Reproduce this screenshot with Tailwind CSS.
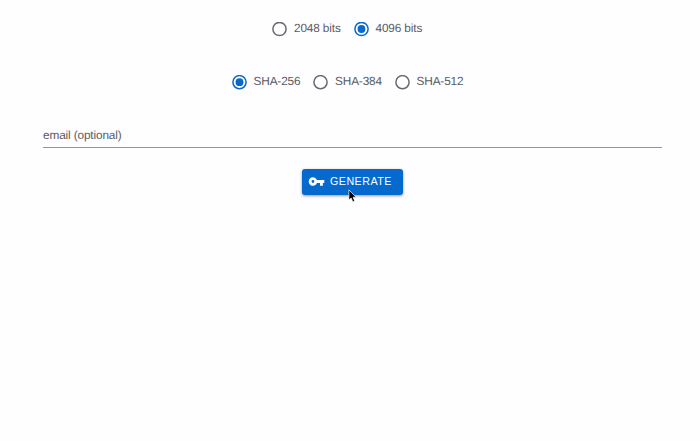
<!DOCTYPE html>
<html lang="en"><head><meta charset="utf-8"><title>Generate key</title>
<script src="https://cdn.jsdelivr.net/npm/@tailwindcss/browser@4"></script></head>
<body class="h-[441px] overflow-hidden bg-[#fefdff] font-['Liberation_Sans',Arial,sans-serif] text-[11.8px] leading-4 tracking-[-0.13px] text-[#5b5b5d] [text-rendering:geometricPrecision]">
<main class="pl-[43px] pr-[38px] pt-[21px]">
<div class="ml-[229px] flex h-4">
<label class="flex w-[81.5px] items-center gap-[7px] whitespace-nowrap"><svg class="size-[15px] shrink-0" viewBox="0 0 15 15"><circle cx="7.5" cy="7" r="6.6" fill="none" stroke="#6a6a6c" stroke-width="1.5"/></svg><span class="-mt-[3px]">2048 bits</span></label>
<label class="flex items-center gap-[7px] whitespace-nowrap"><svg class="size-[15px] shrink-0" viewBox="0 0 15 15"><circle cx="7.5" cy="7" r="6.6" fill="none" stroke="#0969ca" stroke-width="1.5"/><circle cx="7.5" cy="7" r="3.9" fill="#0969ca"/></svg><span class="-mt-[3px]">4096 bits</span></label>
</div>
<div class="ml-[188.5px] mt-[37px] flex h-4">
<label class="flex w-[81.5px] items-center gap-[7px] whitespace-nowrap"><svg class="size-[15px] shrink-0" viewBox="0 0 15 15"><circle cx="7.5" cy="7.2" r="6.6" fill="none" stroke="#0969ca" stroke-width="1.5"/><circle cx="7.5" cy="7.2" r="3.9" fill="#0969ca"/></svg><span class="-mt-[3px]">SHA-256</span></label>
<label class="flex w-[81.5px] items-center gap-[7px] whitespace-nowrap"><svg class="size-[15px] shrink-0" viewBox="0 0 15 15"><circle cx="7.5" cy="7.2" r="6.6" fill="none" stroke="#6a6a6c" stroke-width="1.5"/></svg><span class="-mt-[3px]">SHA-384</span></label>
<label class="flex items-center gap-[7px] whitespace-nowrap"><svg class="size-[15px] shrink-0" viewBox="0 0 15 15"><circle cx="7.5" cy="7.2" r="6.6" fill="none" stroke="#6a6a6c" stroke-width="1.5"/></svg><span class="-mt-[3px]">SHA-512</span></label>
</div>
<div class="mt-[37px] h-[21px] border-b border-[#949397] leading-[17px]">email (optional)</div>
<button class="mt-[21px] ml-[259px] flex h-[25.5px] w-[101px] items-center rounded-[3px] bg-[#0669ce] pl-[6px] text-[10.7px] tracking-[0.48px] text-white shadow-[0_1px_3px_#00000066]"><svg class="mr-[4px] size-[17px] shrink-0" viewBox="0 0 24 24" fill="currentColor"><path d="M12.65 10A6 6 0 1 0 12.65 14H17v4h4v-4h2v-4ZM7 14a2 2 0 1 1 0-4 2 2 0 0 1 0 4Z"/></svg><span class="-mt-px ml-px">GENERATE</span></button>
</main>
<svg class="absolute left-[348px] top-[189px] h-[14px] w-[9px]" viewBox="0 0 9 14"><path d="M.9.9v10.2L3.2 9l1.5 3.7 2-.8-1.6-3.7h3.2Z" fill="#000" stroke="#fff" stroke-width=".7"/></svg>
</body></html>
